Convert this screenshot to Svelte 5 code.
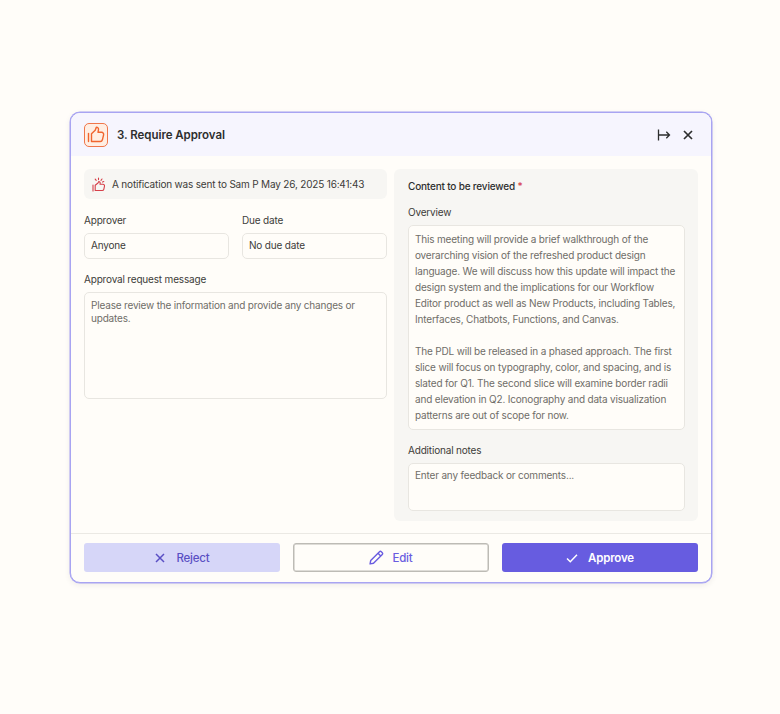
<script lang="ts">
  // Approval step panel: header, request form on the left, review content on the right, decision footer.
  const overview = [
    "This meeting will provide a brief walkthrough of the overarching vision of the refreshed product design language. We will discuss how this update will impact the design system and the implications for our Workflow Editor product as well as New Products, including Tables, Interfaces, Chatbots, Functions, and Canvas.",
    "The PDL will be released in a phased approach. The first slice will focus on typography, color, and spacing, and is slated for Q1. The second slice will examine border radii and elevation in Q2. Iconography and data visualization patterns are out of scope for now.",
  ];
</script>

<div class="page">
  <section class="card">
    <header class="head">
      <span class="step-icon">
        <svg width="18" height="18" viewBox="0 0 18 18" fill="none" stroke="#f0652f" stroke-width="1.4" stroke-linejoin="round" stroke-linecap="round">
          <path d="M1.5 7.5v8" />
          <path d="M4.5 7.8 8.2 4.2 9.3 1.2c1.5 0 2.4 1 2.2 2.4L11 6.3h3.6c1.4 0 2.3 1.2 2 2.5l-1.2 5c-.3 1.1-1.1 1.7-2.2 1.7H4.5z" />
        </svg>
      </span>
      <h1>3. Require Approval</h1>
      <span class="spacer"></span>
      <button class="icon-btn" type="button" aria-label="collapse">
        <svg width="14" height="14" viewBox="0 0 14 14" fill="none" stroke="#2d2e2e" stroke-width="1.3">
          <path d="M1.5 1.5v11" />
          <path d="M2 7h10.5M9.3 3.8 12.5 7l-3.2 3.2" />
        </svg>
      </button>
      <button class="icon-btn" type="button" aria-label="close">
        <svg width="14" height="14" viewBox="0 0 14 14" fill="none" stroke="#2d2e2e" stroke-width="1.7">
          <path d="M3 3l8 8M11 3l-8 8" />
        </svg>
      </button>
    </header>

    <div class="body">
      <div class="left">
        <div class="notice">
          <svg width="14" height="15" viewBox="0 0 14 15" fill="none" stroke="#d6404a" stroke-width="1.1" stroke-linejoin="round" stroke-linecap="round">
            <path d="M1 8v6" />
            <path d="M3.2 8.2 6 6l.8-1.4c1 0 1.5.6 1.4 1.5l-.2 1.2h3c1 0 1.7.8 1.5 1.8l-.7 3.2c-.2.8-.8 1.2-1.6 1.2H3.2z" />
            <path d="M6.5 1v1.6M3.2 2.2l1 1.2M10 2l-1 1.3M11.8 4.6l-1.3.5" />
          </svg>
          <span>A notification was sent to Sam P May 26, 2025 16:41:43</span>
        </div>

        <div class="two">
          <div class="field">
            <span class="label">Approver</span>
            <div class="input">Anyone</div>
          </div>
          <div class="field">
            <span class="label">Due date</span>
            <div class="input">No due date</div>
          </div>
        </div>

        <div class="field message">
          <span class="label">Approval request message</span>
          <div class="input area placeholder">Please review the information and provide any changes or updates.</div>
        </div>
      </div>

      <div class="review">
        <div class="review-title">Content to be reviewed <span class="req">*</span></div>
        <div class="field overview">
          <span class="label">Overview</span>
          <div class="input content">
            {#each overview as para}
              <p>{para}</p>
            {/each}
          </div>
        </div>
        <div class="field notes">
          <span class="label">Additional notes</span>
          <div class="input notes-box placeholder">Enter any feedback or comments...</div>
        </div>
      </div>
    </div>

    <footer class="foot">
      <button class="btn reject" type="button">
        <svg width="12" height="12" viewBox="0 0 12 12" fill="none" stroke="#5a4fc4" stroke-width="1.5"><path d="M2 2l8 8M10 2l-8 8" /></svg>
        Reject
      </button>
      <button class="btn edit" type="button">
        <svg width="15" height="15" viewBox="0 0 14 14" fill="none" stroke="#6a5ce0" stroke-width="1.3" stroke-linejoin="round">
          <path d="M1 13l.6-3.2L9.8 1.6c.5-.5 1.2-.5 1.7 0l.9.9c.5.5.5 1.2 0 1.7L4.2 12.4z" />
          <path d="M8.4 3l2.6 2.6" />
        </svg>
        Edit
      </button>
      <button class="btn approve" type="button">
        <svg width="12" height="12" viewBox="0 0 12 12" fill="none" stroke="#fff" stroke-width="1.5"><path d="M1 6.5l3.3 3.2L11 2.8" /></svg>
        Approve
      </button>
    </footer>
  </section>
</div>

<style>
  :global(body) {
    margin: 0;
    background: #fffdf9;
  }
  .page {
    padding: 112px 68px 131px 70px;
    font-family: Inter, "Liberation Sans", sans-serif;
    font-size: 10px;
    letter-spacing: -0.18px;
    color: #3d3c39;
  }
  .card {
    border: 1px solid #a8a4f2;
    border-radius: 10px;
    background: #fffdf9;
    box-shadow: 0 0 0 0.5px #a8a4f2, 0 2px 6px rgba(40, 30, 20, 0.08);
    overflow: hidden;
  }
  .head {
    display: flex;
    align-items: center;
    height: 43px;
    padding: 0 16px 0 13px;
    background: #f6f5fe;
  }
  .step-icon {
    display: flex;
    align-items: center;
    justify-content: center;
    box-sizing: border-box;
    width: 24px;
    height: 24px;
    border: 1px solid #f0764a;
    border-radius: 5px;
    background: #ffeee3;
  }
  h1 {
    margin: 0 0 0 9px;
    font-size: 11.5px;
    font-weight: 600;
    letter-spacing: -0.05px;
    color: #2d2e2e;
  }
  .spacer {
    flex: 1 1 auto;
  }
  .icon-btn {
    display: flex;
    padding: 0;
    margin-left: 10px;
    border: 0;
    background: none;
  }
  .body {
    display: flex;
    gap: 7px;
    padding: 13px 13px 12px;
  }
  .left {
    width: 303px;
    flex: none;
  }
  .notice {
    display: flex;
    align-items: center;
    gap: 6px;
    height: 30px;
    padding-left: 8px;
    border-radius: 6px;
    background: #f7f6f3;
  }
  .two {
    display: grid;
    grid-template-columns: 1fr 1fr;
    gap: 13px;
    margin-top: 15px;
  }
  .field {
    display: flex;
    flex-direction: column;
  }
  .label {
    line-height: 13px;
    margin-bottom: 6px;
  }
  .input {
    box-sizing: border-box;
    border: 1px solid #e8e6e1;
    border-radius: 5px;
    background: #fffdf9;
    padding: 0 6px;
    line-height: 23px;
    min-height: 26px;
  }
  .message {
    margin-top: 14px;
  }
  .area {
    height: 107px;
    padding-top: 6px;
    line-height: 13px;
  }
  .placeholder {
    color: #6f6d68;
  }
  .review {
    flex: 1 1 auto;
    min-width: 0;
    padding: 11px 13px 10px 14px;
    border-radius: 6px;
    background: #f7f6f3;
  }
  .review-title {
    font-weight: 500;
    color: #2d2e2e;
    line-height: 13px;
  }
  .req {
    color: #d6404a;
  }
  .overview {
    margin-top: 13px;
  }
  .content {
    height: 205px;
    padding: 5px 6px;
    line-height: 16px;
    color: #6f6d68;
  }
  .content p {
    margin: 0 0 16px;
  }
  .notes {
    margin-top: 14px;
  }
  .notes-box {
    height: 48px;
  }
  .foot {
    display: grid;
    grid-template-columns: 1fr 1fr 1fr;
    gap: 13px;
    padding: 9px 13px 10px;
    border-top: 1px solid #ebe9e4;
  }
  .btn {
    display: flex;
    align-items: center;
    justify-content: center;
    gap: 10px;
    height: 29px;
    border-radius: 3px;
    border: 0;
    font-family: inherit;
    font-size: 11.5px;
    letter-spacing: -0.2px;
    font-weight: 500;
  }
  .reject {
    background: #d6d6f8;
    color: #5a4fc4;
  }
  .edit {
    gap: 8px;
    border: 1px solid #bdbbb5;
    box-shadow: inset 0 0 0 0.5px #bdbbb5;
    background: #fffdf9;
    color: #6a5ce0;
  }
  .approve {
    background: #675ce0;
    color: #fff;
    font-weight: 600;
  }
</style>
